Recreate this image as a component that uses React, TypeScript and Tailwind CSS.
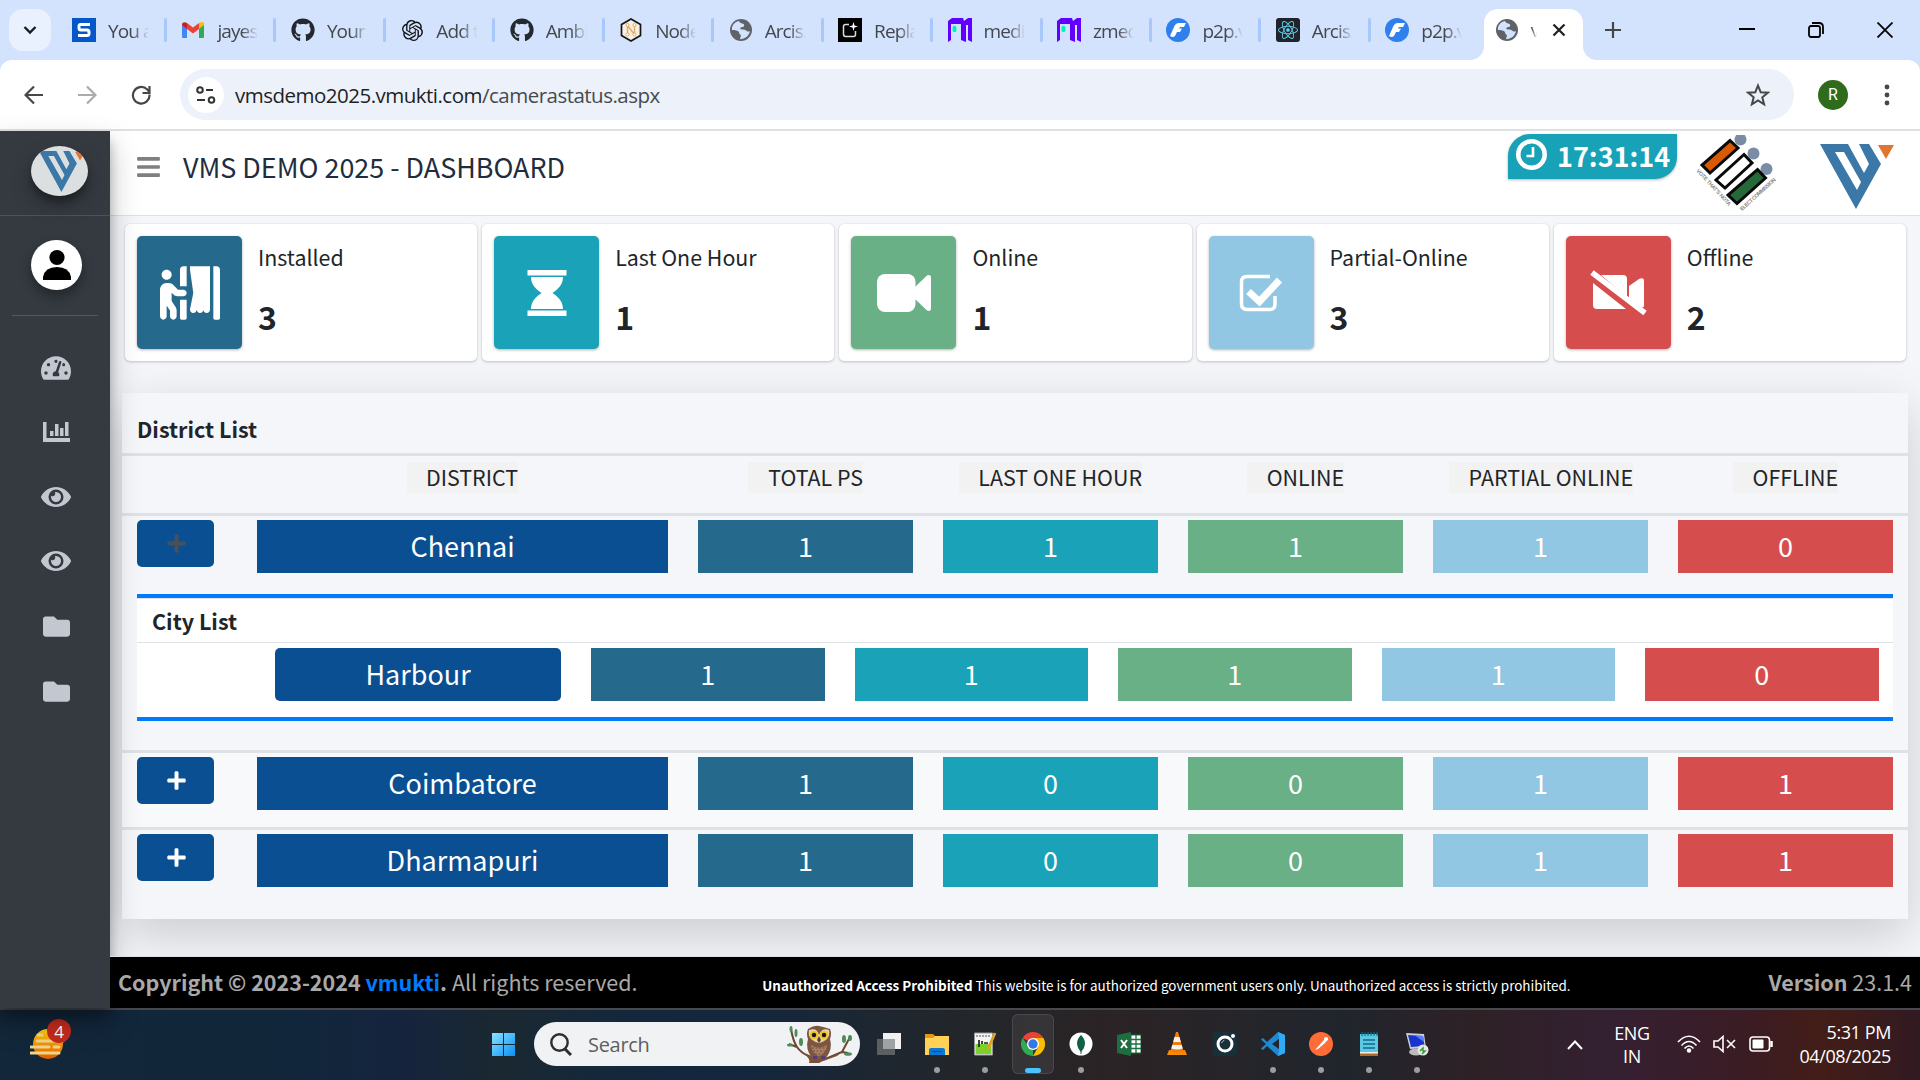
import React from "react";
import { FaGithub, FaPlus, FaTachometerAlt, FaEye, FaFolder, FaBars, FaPersonBooth } from "react-icons/fa";
import { SiOpenai, SiReact } from "react-icons/si";

const sourceSans = "font-['Noto_Sans_CJK_SC','Open_Sans',sans-serif]";
const segoe = "font-['Open_Sans','Noto_Sans',sans-serif]";

function VLogo({ className }: { className?: string }) {
  return (
    <svg viewBox="0 0 74 65" preserveAspectRatio="none" className={className}>
      <path d="M0 0H28L44 29 49 20 39 0H49L61 20 36 65ZM15 8L37 46 41 38 24 8Z" fillRule="evenodd" fill="#3b78a8" />
      <path d="M58 1H74L66 15Z" fill="#e07430" />
    </svg>
  );
}

function Globe() {
  return (
    <svg viewBox="0 0 24 24" className="size-6 shrink-0">
      <circle cx="12" cy="12" r="11" fill="#5f6368" />
      <path d="M10 3C5 4 2.500 8 3 12c2 .3 5 .2 6.500 1.500 1 1 .5 3 2.500 3.500l-1 4.300c5-.3 9-3.300 10-8.300-1.500 1-3 .5-4-.5-1.500-1.500-4-.5-5.500-1.500-1-1 .5-2 2-2s2-1.500 1.500-2.500c-1-1.500-4-.5-5-3.500z" fill="#d3e3fd" />
    </svg>
  );
}

function Gmail() {
  return (
    <svg viewBox="0 0 24 18" className="h-[18px] w-6">
      <path d="M1 3v13q0 1 1 1h4V7Z" fill="#4285f4" />
      <path d="M23 3v13q0 1-1 1h-4V7Z" fill="#34a853" />
      <path d="M18 2v6l5-4V3q0-3-4-1.500Z" fill="#fbbc04" />
      <path d="M6 2v6l6 4.500L18 8V2l-6 4.500Z" fill="#ea4335" />
      <path d="M1 3v1l5 4V2Q2 0 1 3Z" fill="#c5221f" />
    </svg>
  );
}

function MIcon() {
  return (
    <svg viewBox="0 0 24 24" className="size-6">
      <path d="M0 3L4 0H15L16 3L20 0H24V24L20 22V7H18V24L13 22V6H3V22L0 24Z" fill="#6200ff" />
      <ellipse cx="6.500" cy="11" rx="2" ry="3.200" fill="#00f0b5" />
    </svg>
  );
}

function FIcon() {
  return (
    <svg viewBox="0 0 24 24" className="size-6">
      <circle cx="12" cy="12" r="12" fill="#2f80ed" />
      <path d="M4 18L8 9q1.500-4 5-4h7l-2 4h-4l-1 1.500h3L14 14h-3l-2 4q-2 2-5 0Z" fill="#fff" />
    </svg>
  );
}

const tabs: { label: string; icon: React.ReactNode }[] = [
  {
    label: "You a",
    icon: (
      <svg viewBox="0 0 24 24" className="size-6">
        <path d="M0 0h24v24H0z" fill="#0556c9" />
        <path d="M18 6.500H8.500q-1.500 0-1.500 2v1.500q0 2 2 2h6q2 0 2 2v1.500q0 2-2 2H6" fill="none" stroke="#fff" strokeWidth="3" />
      </svg>
    ),
  },
  { label: "jayes", icon: <Gmail /> },
  { label: "Your", icon: <FaGithub className="size-6 text-[#24292f]" /> },
  { label: "Add t", icon: <SiOpenai className="size-[21px] text-[#111]" /> },
  { label: "Ambi", icon: <FaGithub className="size-6 text-[#24292f]" /> },
  {
    label: "Node",
    icon: (
      <svg viewBox="0 0 24 24" className="size-6">
        <path d="M12 1l9.500 5.500v11L12 23l-9.500-5.500v-11Z" fill="#f5efe6" stroke="#151515" strokeWidth="1.700" />
        <path d="M8.500 16.500v-9l7 9v-9" fill="none" stroke="#e8a758" strokeWidth="1.300" />
        <circle cx="8.500" cy="7" r="1.500" fill="#fff" stroke="#e8a758" />
        <circle cx="15.500" cy="7" r="1.500" fill="#fff" stroke="#e8a758" />
        <circle cx="8.500" cy="16.500" r="1.500" fill="#fff" stroke="#e8a758" />
        <circle cx="15.500" cy="16.500" r="1.500" fill="#fff" stroke="#e8a758" />
      </svg>
    ),
  },
  { label: "Arcis.", icon: <Globe /> },
  {
    label: "Repla",
    icon: (
      <svg viewBox="0 0 24 24" className="size-6">
        <path d="M0 0h24v24H0z" fill="#000" />
        <path d="M11 6.500H7.500Q5.500 6.500 5.500 8.500v7.500q0 2.500 2 2.500h8q2 0 2-2V13" fill="none" stroke="#ddd" strokeWidth="1.500" />
        <path d="M15.500 4l1 3.500 3.500 1-3.500 1-1 3.500-1-3.500-3.500-1 3.500-1Z" fill="#fff" />
      </svg>
    ),
  },
  { label: "medi", icon: <MIcon /> },
  { label: "zmed", icon: <MIcon /> },
  { label: "p2p.v", icon: <FIcon /> },
  {
    label: "Arcis.",
    icon: (
      <span className="flex size-6 items-center justify-center rounded-[3px] bg-[#20232a]">
        <SiReact className="size-[20px] text-[#5fd3ee]" />
      </span>
    ),
  },
  { label: "p2p.v", icon: <FIcon /> },
];

function TabStrip() {
  return (
    <div className="flex h-[60px] bg-[#d3e3fd]">
      <div className="ml-[9px] mt-[9px] flex h-[42px] w-[42px] items-center justify-center rounded-[14px] bg-[#e9f0fe]">
        <svg viewBox="0 0 14 10" className="h-[10px] w-[14px]">
          <path d="M1.500 2L7 7.500 12.500 2" fill="none" stroke="#1c1c1c" strokeWidth="2.400" />
        </svg>
      </div>
      <div className="ml-[21px] flex">
        {tabs.map((t, i) => (
          <div key={i} className="flex h-[60px] w-[109.45px] items-center">
            <span className="flex w-6 shrink-0 justify-center">{t.icon}</span>
            <span className="ml-3 w-[41px] whitespace-nowrap pt-[2px] text-[19px] leading-7 tracking-[-0.9px] text-[#44474c] [mask-image:linear-gradient(to_right,black_60%,transparent)]">
              {t.label}
            </span>
            {i < 12 && <span className="ml-[15px] h-6 w-[3px] shrink-0 rounded-sm bg-[#a8c7fa]" />}
          </div>
        ))}
      </div>
      <div className="relative -ml-[11px] mt-[9px] flex h-[51px] w-[99px] items-center rounded-t-[14px] bg-white pb-[9px] pl-[11px]">
        <svg viewBox="0 0 14 14" className="absolute -left-[14px] bottom-0 size-[14px]"><path d="M0 14A14 14 0 0 0 14 0V14Z" fill="#fff" /></svg>
        <svg viewBox="0 0 14 14" className="absolute -right-[14px] bottom-0 size-[14px]"><path d="M14 14A14 14 0 0 1 0 0V14Z" fill="#fff" /></svg>
        <Globe />
        <span className="ml-[12px] w-[6px] text-[19px] leading-7 text-[#333] [mask-image:linear-gradient(to_right,black,transparent)]">v</span>
        <svg viewBox="0 0 14 14" className="ml-[15px] size-[14px]"><path d="M1.500 1.500l11 11m0-11l-11 11" stroke="#1f1f1f" strokeWidth="2.200" /></svg>
      </div>
      <div className="flex flex-1 items-center">
        <svg viewBox="0 0 16 16" className="ml-[22px] size-4"><path d="M8 0v16M0 8h16" stroke="#444746" strokeWidth="2.200" /></svg>
        <svg viewBox="0 0 16 16" className="ml-[118px] size-4"><path d="M0 7h16" stroke="#000" strokeWidth="2" /></svg>
        <svg viewBox="0 0 16 16" className="ml-[53px] size-4">
          <rect x="1" y="4" width="11" height="11" rx="2" fill="none" stroke="#000" strokeWidth="1.800" />
          <path d="M4 1h7q4 0 4 4v7" fill="none" stroke="#000" strokeWidth="1.800" />
        </svg>
        <svg viewBox="0 0 16 16" className="ml-[53px] size-4"><path d="M.5.5l15 15m0-15l-15 15" stroke="#000" strokeWidth="1.800" /></svg>
      </div>
    </div>
  );
}

function Toolbar() {
  return (
    <div className="bg-[#d3e3fd]">
      <div className="flex h-[71px] items-center rounded-t-[12px] border-b-[2px] border-[#dfe0e2] bg-white">
        <svg viewBox="0 0 20 20" className="ml-[24px] size-5"><path d="M19 10H2M10 1.500L1.500 10l8.500 8.500" fill="none" stroke="#474747" strokeWidth="2.200" /></svg>
        <svg viewBox="0 0 20 20" className="ml-[33px] size-5"><path d="M1 10h17M10 1.500L18.500 10 10 18.500" fill="none" stroke="#ababab" strokeWidth="2.200" /></svg>
        <svg viewBox="0 0 20 20" className="ml-[34px] size-5"><path d="M18.500 9.500A8.300 8.300 0 1 1 16 4.300L18.500 7M18.500 1v7h-7" fill="none" stroke="#474747" strokeWidth="2.200" /></svg>
        <div className="ml-[29px] flex h-[51px] w-[1614px] items-center rounded-full bg-[#ecf1fa]">
          <span className="ml-[8px] flex size-[36px] items-center justify-center rounded-full bg-white">
            <svg viewBox="0 0 20 18" className="h-[18px] w-5">
              <g fill="none" stroke="#333" strokeWidth="2"><circle cx="4" cy="4" r="2.800" /><path d="M10 4h7" /><circle cx="15.500" cy="14" r="2.800" /><path d="M1 14h8" /></g>
            </svg>
          </span>
          <span className="ml-[11px] whitespace-nowrap text-[20.500px] leading-8 tracking-[-0.510px] text-[#1f1f1f]">
            vmsdemo2025.vmukti.com<span className="text-[#474a4f]">/camerastatus.aspx</span>
          </span>
          <svg viewBox="0 0 24 24" className="ml-auto mr-[24px] size-6"><path d="M12 2.500l2.700 6.700 7.100.5-5.500 4.600 1.800 7L12 17.400l-6.100 3.900 1.800-7L2.200 9.700l7.100-.5Z" fill="none" stroke="#474747" strokeWidth="2" /></svg>
        </div>
        <span className="ml-[24px] flex size-[30px] items-center justify-center rounded-full bg-[#2f6b1d] font-['Roboto',sans-serif] text-[16px] text-white">R</span>
        <svg viewBox="0 0 6 22" className="ml-[36px] h-[22px] w-[6px]"><g fill="#474747"><circle cx="3" cy="3" r="2.400" /><circle cx="3" cy="11" r="2.400" /><circle cx="3" cy="19" r="2.400" /></g></svg>
      </div>
    </div>
  );
}

function ChartIcon() {
  return (
    <svg viewBox="0 0 27 20" className="h-5 w-[27px]">
      <path d="M0 0h3.500v16H27v4H0ZM7 9h3.500v5H7ZM12 2h3.500v12H12ZM17 6h3.500v8H17ZM22 0h3.500v14H22Z" fill="#c2c7d0" />
    </svg>
  );
}

function Sidebar() {
  return (
    <div className="relative z-10 flex w-[110px] shrink-0 flex-col bg-[#343a40] shadow-[0_14px_28px_rgba(0,0,0,.25),0_10px_10px_rgba(0,0,0,.22)]">
      <div className="h-[85px] border-b border-[#4b545c] pl-[31px] pt-[15px]">
        <div className="flex h-[50px] w-[57px] items-center justify-center overflow-hidden rounded-[50%] bg-[#dcdfe0] shadow-[0_10px_20px_rgba(0,0,0,.25),0_6px_6px_rgba(0,0,0,.25)]">
          <VLogo className="ml-1 h-[41px] w-[46px]" />
        </div>
      </div>
      <div className="mx-3 h-[100px] border-b border-[#4f5962] pl-[19px] pt-6">
        <div className="flex h-[50px] w-[51px] items-center justify-center rounded-full bg-white shadow-[0_6px_12px_rgba(0,0,0,.35)]">
          <svg viewBox="0 0 28 30" className="h-[30px] w-7"><ellipse cx="14" cy="7.500" rx="7.600" ry="7.500" /><path d="M0 30V27Q2 17 14 17t14 10v3Z" /></svg>
        </div>
      </div>
      <div className="flex flex-col items-center pl-[2px] pt-[36px] text-[#c2c7d0]">
        <span className="flex h-[32px] items-center"><FaTachometerAlt className="size-[30px]" /></span>
        <span className="mt-[32px] flex h-[32px] items-center"><ChartIcon /></span>
        <span className="mt-[33px] flex h-[32px] items-center"><FaEye className="size-[30px]" /></span>
        <span className="mt-[32px] flex h-[32px] items-center"><FaEye className="size-[30px]" /></span>
        <span className="mt-[33px] flex h-[32px] items-center"><FaFolder className="size-[27px]" /></span>
        <span className="mt-[33px] flex h-[32px] items-center"><FaFolder className="size-[27px]" /></span>
      </div>
    </div>
  );
}

function VoterLogo() {
  return (
    <svg viewBox="0 0 82 76" className="ml-[19px] mt-[4px] h-[76px] w-[82px]">
      <circle cx="44.500" cy="4.500" r="6" fill="#7a8ba6" /><circle cx="57.500" cy="18.500" r="6" fill="#7a8ba6" /><circle cx="70.500" cy="34" r="6" fill="#7a8ba6" />
      <g stroke="#0a0a0a" strokeWidth="3">
        <path d="M34 5.500L42 13 14 38 6 30Z" fill="#d95a04" />
        <path d="M48 19.500L56 28 29 53 20 45Z" fill="#fff" />
        <path d="M61.500 34.500L69.500 43 41 68.500 32 60Z" fill="#25693a" />
      </g>
      <g fontSize="5.500" fill="#8a8a8a" fontFamily="Liberation Sans" fontWeight="bold">
        <text transform="translate(0 36) rotate(47)" textLength="48">VOTE THAT'S NOTA</text>
        <text transform="translate(46 76) rotate(-42)" textLength="46">ELECT COMMISSION</text>
      </g>
    </svg>
  );
}

function Header() {
  return (
    <div className="flex h-[85px] border-b border-[#dee2e6] bg-white">
      <FaBars className="ml-[27px] mt-[23px] h-[26px] w-[23px] text-[#7f7f7f]" />
      <h1 className="ml-[23px] mt-[15px] whitespace-nowrap text-[26.900px] leading-[42px] text-[#1f2d3d]">VMS DEMO 2025 - DASHBOARD</h1>
      <div className="ml-auto mt-[3px] flex h-[45px] w-[169px] items-center whitespace-nowrap rounded-br-[22px] rounded-tl-[22px] bg-[#17a2b8] shadow-[0_1px_3px_rgba(0,0,0,.3)]">
        <svg viewBox="0 0 31 31" className="mb-[4px] ml-[8px] size-[31px] shrink-0"><circle cx="15.500" cy="15.500" r="13.200" fill="none" stroke="#fff" strokeWidth="4.600" /><path d="M17 8v9h-6.500" fill="none" stroke="#fff" strokeWidth="2.600" /></svg>
        <span className="ml-[10px] pb-[2px] text-[27px] font-bold leading-[40px] text-white">17:31:14</span>
      </div>
      <VoterLogo />
      <VLogo className="ml-[42px] mr-[26px] mt-[13px] h-[65px] w-[74px]" />
    </div>
  );
}

function Hourglass() {
  return (
    <svg viewBox="0 0 40 46" className="h-[46px] w-10">
      <path d="M.5 0h39v5.500H.5ZM.5 40.500h39V46H.5ZM4 7h32c0 8-5 12-10.500 16C31 27 36 31 36 39H4c0-8 5-12 10.500-16C9 19 4 15 4 7Z" fill="#fff" />
    </svg>
  );
}

function Camcorder() {
  return (
    <svg viewBox="0 0 54 38" className="h-[38px] w-[54px]">
      <rect width="38.500" height="38" rx="8" fill="#fff" />
      <path d="M38 13L50 1.500Q54 0 54 4V34Q54 38 50 36.500L38 25Z" fill="#fff" />
    </svg>
  );
}

function CamcorderOff() {
  return (
    <svg viewBox="0 0 57 46" className="h-[46px] w-[57px]">
      <path d="M11 5H33Q37 5 37 9V27ZM3 13L36 39H7Q3 39 3 35ZM39 16L49 9Q54 7 54 11V36Q54 38 51 37L39 28Z" fill="#fff" />
      <path d="M2 2.500L55 43" stroke="#fff" strokeWidth="5.500" />
    </svg>
  );
}

function CheckSquare() {
  return (
    <svg viewBox="0 0 44 38" className="h-[38px] w-[44px]">
      <path d="M31 2.500H8Q2.500 2.500 2.500 8v22q0 5.500 5.500 5.500h23q5 0 5-5.500V22" fill="none" stroke="#fff" strokeWidth="3.500" />
      <path d="M9.500 17.500l11 10L40.500 6" fill="none" stroke="#fff" strokeWidth="7" />
    </svg>
  );
}

const cards = [
  { label: "Installed", value: "3", bg: "bg-[#256a8c]", icon: <FaPersonBooth className="size-[60px]" /> },
  { label: "Last One Hour", value: "1", bg: "bg-[#1aa2b8]", icon: <Hourglass /> },
  { label: "Online", value: "1", bg: "bg-[#69b087]", icon: <Camcorder /> },
  { label: "Partial-Online", value: "3", bg: "bg-[#92c7e3]", icon: <CheckSquare /> },
  { label: "Offline", value: "2", bg: "bg-[#d64d4d]", icon: <CamcorderOff /> },
];

function StatCards() {
  return (
    <div className="ml-[15px] mr-[14px] mt-[8px] grid grid-cols-5 gap-[5px]">
      {cards.map((c) => (
        <div key={c.label} className="flex h-[137px] rounded-[5px] bg-white p-3 shadow-[0_0_1px_rgba(0,0,0,.125),0_1px_3px_rgba(0,0,0,.2)]">
          <div className={"flex h-[113px] w-[105px] shrink-0 items-center justify-center rounded-[5px] text-white shadow-[0_1px_3px_rgba(0,0,0,.3)] " + c.bg}>{c.icon}</div>
          <div className="ml-4 text-[#212529]">
            <div className="mt-[2px] whitespace-nowrap text-[21.400px] leading-[38px]">{c.label}</div>
            <div className="mt-[20px] text-[32px] font-bold leading-[40px]">{c.value}</div>
          </div>
        </div>
      ))}
    </div>
  );
}

const tones = ["bg-[#256a8c]", "bg-[#1aa2b8]", "bg-[#69b087]", "bg-[#92c7e3]", "bg-[#d64d4d]"];

function Cells({ values }: { values: number[] }) {
  return (
    <>
      {values.map((v, i) => (
        <div key={i} className={"h-[53px] text-center text-[27px] leading-[51px] text-white " + tones[i]}>{v}</div>
      ))}
    </>
  );
}

function DistrictRow({ name, values, open }: { name: string; values: number[]; open?: boolean }) {
  return (
    <div className="grid grid-cols-[90px_411px_repeat(5,215px)] gap-x-[30px] pl-[15px] pt-1">
      <div className="mr-[13px] flex h-[47px] items-center justify-center rounded-[5px] bg-[#0a4f92] pl-px">
        <FaPlus className={open ? "size-[21px] text-[#495057]" : "size-[21px] text-white"} />
      </div>
      <div className="h-[53px] bg-[#0a4f92] text-center text-[27px] leading-[51px] text-white">{name}</div>
      <Cells values={values} />
    </div>
  );
}

const heads: { label: string; pad: string }[] = [
  { label: "DISTRICT", pad: "ml-[285px] w-[111px]" },
  { label: "TOTAL PS", pad: "ml-[230px] w-[115px]" },
  { label: "LAST ONE HOUR", pad: "ml-[96px] w-[183px]" },
  { label: "ONLINE", pad: "ml-[105px] w-[97px]" },
  { label: "PARTIAL ONLINE", pad: "ml-[105px] w-[184px]" },
  { label: "OFFLINE", pad: "ml-[100px] w-[105px]" },
];

function DistrictPanel() {
  return (
    <div className="ml-3 mt-8 h-[526px] w-[1786px] bg-[#f4f6f9] text-[#212529] shadow-[0_16px_48px_rgba(0,0,0,.175)]">
      <div className="h-[60px] pl-[15px] pt-[18px] text-[21.500px] font-bold leading-[36px]">District List</div>
      <div className="flex h-[60px] border-t-[3px] border-[#dee2e6] pt-[6px]">
        {heads.map((h) => (
          <div key={h.label} className={"h-[31px] shrink-0 whitespace-nowrap bg-[#f2f2f2] text-right text-[21.400px] leading-[30px] " + h.pad}>{h.label}</div>
        ))}
      </div>
      <div className="h-[237px] border-t-[3px] border-[#dee2e6]">
        <DistrictRow name="Chennai" values={[1, 1, 1, 1, 0]} open />
        <div className="mx-[15px] mt-[21px] h-[127px] border-y-[4px] border-[#007bff] bg-white">
          <div className="h-[45px] border-b border-t border-[#dee2e6] pl-[15px] text-[21.500px] font-bold leading-[43px]">City List</div>
          <div className="grid grid-cols-[286px_repeat(5,233.5px)] gap-x-[30px] pl-[138px] pt-[5px]">
            <div className="h-[53px] rounded-[5px] bg-[#0a4f92] text-center text-[27px] leading-[51px] text-white">Harbour</div>
            <Cells values={[1, 1, 1, 1, 0]} />
          </div>
        </div>
      </div>
      <div className="h-[77px] border-t-[3px] border-[#dee2e6] bg-[#f8f9fb]">
        <DistrictRow name="Coimbatore" values={[1, 0, 0, 1, 1]} />
      </div>
      <div className="h-[60px] border-t-[3px] border-[#dee2e6]">
        <DistrictRow name="Dharmapuri" values={[1, 0, 0, 1, 1]} />
      </div>
    </div>
  );
}

function Footer() {
  return (
    <div className="relative z-20 mt-auto grid h-[52px] grid-cols-3 border-t border-[#dee2e6] bg-black text-[#a9a9a9]">
      <div className="whitespace-nowrap pl-[8px] text-[21.500px] leading-[50px]">
        <b>Copyright © 2023-2024 <span className="text-[#007bff]">vmukti</span>.</b> All rights reserved.
      </div>
      <div className="whitespace-nowrap pl-[49px] pt-[5px] text-[13.430px] leading-[46px] text-white"><b>Unauthorized Access Prohibited</b> This website is for authorized government users only. Unauthorized access is strictly prohibited.</div>
      <div className="pr-[8px] text-right text-[21.500px] leading-[50px]"><b>Version</b> 23.1.4</div>
    </div>
  );
}

function Owl() {
  return (
    <svg viewBox="0 0 66 38" className="h-[38px] w-[66px]">
      <path d="M4 4Q6 16 10 22T22 31L36 35 55 27 63 12M10 22L2 19M55 27L61 28" fill="none" stroke="#6b4630" strokeWidth="2" />
      <path d="M16 28Q26 33 36 33T56 26L50 31 36 36 32 38H22Q24 34 16 28Z" fill="#7a5238" />
      <g fill="#4f8a5b"><ellipse cx="4" cy="4" rx="1.500" ry="3" /><ellipse cx="9" cy="8" rx="1.500" ry="4" /><ellipse cx="14" cy="17" rx="2" ry="4" /><ellipse cx="3" cy="20" rx="3" ry="1.500" /><ellipse cx="57" cy="14" rx="2" ry="4" /><ellipse cx="63" cy="13" rx="2" ry="3" /><ellipse cx="61" cy="29" rx="4" ry="1.800" /></g>
      <path d="M21 4q6-4 11-3t11 3q2 5 0 10 3 10-4 19-7 3-14 0-7-9-4-19-2-5 0-10Z" fill="#7d5540" />
      <path d="M22 5q8-3 10 5 3-8 10-5 2 10-10 13Q20 15 22 5Z" fill="#e8d3a8" />
      <circle cx="27" cy="10" r="4" fill="#f3c416" /><circle cx="37" cy="10" r="4" fill="#f3c416" />
      <circle cx="27" cy="10" r="2.200" fill="#171717" /><circle cx="37" cy="10" r="2.200" fill="#171717" />
      <path d="M32 11l2 4-2 3-2-3Z" fill="#5b3b2d" />
      <path d="M24 20q8 5 16 0-1 9-8 11-7-2-8-11Z" fill="#a98064" /><path d="M25 23h14M26 26h12M28 29h8" stroke="#70503e" strokeDasharray="2 1.500" />
      <path d="M27 31v3m2-3v3m6-3v3m2-3v3" stroke="#3c3299" strokeWidth="1.300" />
    </svg>
  );
}

const apps: { icon: React.ReactNode; dot?: boolean; active?: boolean }[] = [
  { icon: <svg viewBox="0 0 24 24" className="size-6"><path d="M6 1h18v16H6z" fill="#f1f1f1" /><path d="M0 7h18v16H0z" fill="#5c5f62" /><path d="M6 7h12v10H6z" fill="#9fa1a3" /></svg> },
  { dot: true, icon: <svg viewBox="0 0 24 24" className="size-6"><path d="M0 2h8l2 2h14v6H0z" fill="#e09b10" /><path d="M0 6h8l2-2h14v19H0z" fill="#ffd257" /><path d="M4 23v-5q0-2 2-2h12q2 0 2 2v5z" fill="#0a78d4" /><path d="M7 19.500h10" stroke="#064c8e" /></svg> },
  { dot: true, icon: <svg viewBox="0 0 24 24" className="size-6"><path d="M1.500 1h18v22h-18z" fill="#f5f5f5" stroke="#999" /><path d="M2.500 12h16v10h-16z" fill="#7ed12a" /><path d="M3 4h15" stroke="#888" strokeWidth="1.500" strokeDasharray="2 1" /><path d="M6 8v7m3-6v3m2-1h4" stroke="#222" strokeWidth="1.700" /><path d="M22 1l-7 16" stroke="#e3a124" strokeWidth="3" /></svg> },
  {
    dot: true, active: true,
    icon: (
      <svg viewBox="0 0 24 24" className="size-6">
        <path d="M12 12L1.600 6A12 12 0 0 1 22.400 6Z" fill="#ea4335" /><path d="M12 12V24A12 12 0 0 1 1.600 6L6 12Z" fill="#34a853" />
        <path d="M12 6h10.400A12 12 0 0 1 12 24l5.200-9Z" fill="#fbbc04" />
        <circle cx="12" cy="12" r="6" fill="#fff" /><circle cx="12" cy="12" r="4.700" fill="#3078ec" />
      </svg>
    ),
  },
  { dot: true, icon: <svg viewBox="0 0 24 24" className="size-6"><circle cx="12" cy="12" r="11.500" fill="#fff" /><path d="M12 3q8 8 0 17-8-9 0-17Z" fill="#116149" /><path d="M12 14v8" stroke="#116149" /></svg> },
  { icon: <svg viewBox="0 0 24 24" className="size-6"><path d="M14 3h10v18H14z" fill="#fff" stroke="#1d6f42" /><path d="M14 7.500h10M14 12h10M14 16.500h10M19 3v18" stroke="#1d6f42" strokeWidth="1.300" /><path d="M0 3l14-3v24L0 21Z" fill="#1d6f42" /><path d="M4 8l6 8m0-8l-6 8" stroke="#fff" strokeWidth="2" /></svg> },
  { icon: <svg viewBox="0 0 24 24" className="size-6"><path d="M4 18h16l2 5H2Z" fill="#f58a07" /><path d="M11 0h2L18.500 19q-6.500 3-13 0Z" fill="#f47c0c" /><path d="M9.500 5h5l1.300 5H8.200ZM7.300 13h9.400l1 3.500q-5.500 2-11.400 0Z" fill="#f3f3f3" /></svg> },
  { icon: <svg viewBox="0 0 24 24" className="size-6"><rect width="24" height="24" rx="4" fill="#17303a" /><circle cx="12" cy="12" r="7" fill="none" stroke="#fff" strokeWidth="3" /><path d="M8.500 11q1-2 3-3" stroke="#bbb" strokeWidth="1" fill="none" /><circle cx="20" cy="4" r="2" fill="#fff" /></svg> },
  { dot: true, icon: <svg viewBox="0 0 24 24" className="size-6"><path d="M17 0l7 3v18l-7 3L6 14l-4 4-2-1.500L5 12 0 7.500 2 6l4 4Zm1 7l-7 5 7 5Z" fillRule="evenodd" fill="#1f88d2" /><path d="M17 0l7 3v18l-7 3 1-4V4Z" fill="#2eabf6" /></svg> },
  { dot: true, icon: <svg viewBox="0 0 24 24" className="size-6"><circle cx="12" cy="12" r="12" fill="#ff6c37" /><path d="M6 18l8-9 3-3q2-1 2 1l-3 4-7 6Z" fill="#fff" /><circle cx="17" cy="7" r="2" fill="#fff" /></svg> },
  { dot: true, icon: <svg viewBox="0 0 24 24" className="size-6"><path d="M3 2h18v20H3z" fill="#5cc8e4" /><path d="M3 21h18v3H3z" fill="#b06a25" /><path d="M3 20h18v1.500H3z" fill="#eee" /><path d="M5 0v4m3-4v4m3-4v4m3-4v4m3-4v4m3-4v4" stroke="#126b87" strokeWidth="1.200" /><path d="M6 8h12M6 12h12M6 16h12" stroke="#126b87" strokeWidth="1.500" /></svg> },
  { dot: true, icon: <svg viewBox="0 0 24 24" className="size-6"><path d="M1 1l18 1 2 14-16 1Z" fill="#ccd0d6" /><path d="M3 3l15 1 1.500 10L6 15Z" fill="#1733d0" /><path d="M10 3.500l8 .5 1 6Z" fill="#5d7cf5" /><ellipse cx="11" cy="20" rx="7" ry="3.500" fill="#bbb" /><circle cx="18" cy="18" r="5.500" fill="#e8e8e8" /><path d="M15 19l3-3v3h2l-3 3" stroke="#2d9e3a" strokeWidth="1.500" fill="none" /></svg> },
];

function Taskbar() {
  return (
    <div className={"flex h-[72px] border-t-2 border-[#47494f] bg-[linear-gradient(90deg,#12273a_0%,#12263b_16%,#15243d_21%,#1a2831_26%,#14283c_32%,#13273d_39%,#20262e_47%,#242629_52%,#2b2325_58%,#25252a_65%,#20252c_70%,#2e2126_77%,#342032_84%,#3b1c24_91%,#431d17_95%,#311a22_100%)] text-white " + segoe}>
      <div className="relative ml-[30px] mt-[18px] h-[36px] w-[42px]">
        <svg viewBox="0 0 36 32" className="h-8 w-9">
          <defs><linearGradient id="sun" x2="0" y2="1"><stop stopColor="#ffce0c" /><stop offset="1" stopColor="#e05c00" /></linearGradient></defs>
          <ellipse cx="18" cy="16" rx="15" ry="15" fill="url(#sun)" />
          <path d="M8 7h4M7 13h26M1 19h18M24 19h5M1 25h28" stroke="#f0d58a" strokeWidth="3" strokeLinecap="round" />
        </svg>
        <span className="absolute -top-[9px] left-[17px] flex size-6 items-center justify-center rounded-full bg-[#c42b1c] text-[17px] leading-none">4</span>
      </div>
      <svg viewBox="0 0 23 23" className="ml-[420px] mt-[23px] size-[23px]">
        <defs><linearGradient id="win" x2="1" y2="1"><stop stopColor="#8be2ff" /><stop offset="1" stopColor="#0791f5" /></linearGradient></defs>
        <path d="M0 0h11v11H0zM12 0h11v11H12zM0 12h11v11H0zM12 12h11v11H12z" fill="url(#win)" />
      </svg>
      <div className="ml-[19px] mt-[12px] flex h-[44px] w-[326px] items-center rounded-full bg-[#f1f2f4]">
        <svg viewBox="0 0 22 23" className="ml-4 h-[23px] w-[22px]"><circle cx="9.500" cy="9.500" r="8.200" fill="none" stroke="#2e2e2e" strokeWidth="2.400" /><path d="M15 16l6 6" stroke="#2e2e2e" strokeWidth="3" /></svg>
        <span className="ml-4 pt-[2px] text-[20px] leading-7 tracking-[-0.3px] text-[#5f5f5f]">Search</span>
        <span className="ml-auto mr-[7px]"><Owl /></span>
      </div>
      <div className="ml-[5px] flex">
        {apps.map((a, i) => (
          <div key={i} className="flex h-[70px] w-12 flex-col items-center">
            <div className={a.active ? "mt-1 flex h-[60px] w-[42px] flex-col items-center rounded-[6px] border border-white/10 bg-white/[.07] pt-[17px]" : "mt-[22px] flex flex-col items-center"}>
              {a.icon}
              {a.dot && <span className={a.active ? "mt-[12px] h-[5px] w-4 shrink-0 rounded-full bg-[#4cc2ff]" : "mt-[11px] size-[6px] rounded-full bg-[#9a9c9f]"} />}
            </div>
          </div>
        ))}
      </div>
      <svg viewBox="0 0 16 10" className="ml-[126px] mt-[30px] h-[10px] w-4"><path d="M1 9l7-7.500L15 9" fill="none" stroke="#fff" strokeWidth="2" /></svg>
      <div className="ml-[24px] mt-[12px] w-[50px] text-center text-[18px] leading-[23px] tracking-[-0.4px]">ENG<br />IN</div>
      <svg viewBox="0 0 24 18" className="ml-[20px] mt-[25px] h-[18px] w-6"><g fill="none" stroke="#fff" strokeWidth="1.700"><path d="M1 7Q12-4.500 23 7" /><path d="M4.500 10.500Q12 2.500 19.500 10.500" /><path d="M7.500 13.500Q12 8.500 16.500 13.500" /></g><circle cx="12" cy="15.500" r="2.200" fill="#fff" /></svg>
      <svg viewBox="0 0 24 18" className="ml-[12px] mt-[25px] h-[18px] w-6"><path d="M1 6h4l5-4.500v15L5 12H1ZM14 5l8 8m0-8l-8 8" fill="none" stroke="#fff" strokeWidth="1.600" /></svg>
      <svg viewBox="0 0 25 16" className="ml-[12px] mt-[26px] h-4 w-[25px]"><rect x="1" y="1" width="19.500" height="14" rx="3" fill="none" stroke="#fff" strokeWidth="1.600" /><rect x="3.500" y="3.500" width="11" height="9" rx="1" fill="#fff" /><path d="M22.500 5v6" stroke="#fff" strokeWidth="2.500" /></svg>
      <div className="ml-auto mr-[29px] mt-[10px] text-right text-[18px] leading-[24px] tracking-[-0.4px]">5:31 PM<br />04/08/2025</div>
    </div>
  );
}

export default function App() {
  return (
    <div className="flex h-[1080px] w-[1920px] flex-col overflow-hidden bg-white">
      <div className={segoe}>
        <TabStrip />
        <Toolbar />
      </div>
      <div className={"flex h-[877px] " + sourceSans}>
        <Sidebar />
        <div className="flex w-[1810px] flex-col bg-[#f4f6f9]">
          <Header />
          <StatCards />
          <DistrictPanel />
          <Footer />
        </div>
      </div>
      <Taskbar />
    </div>
  );
}
